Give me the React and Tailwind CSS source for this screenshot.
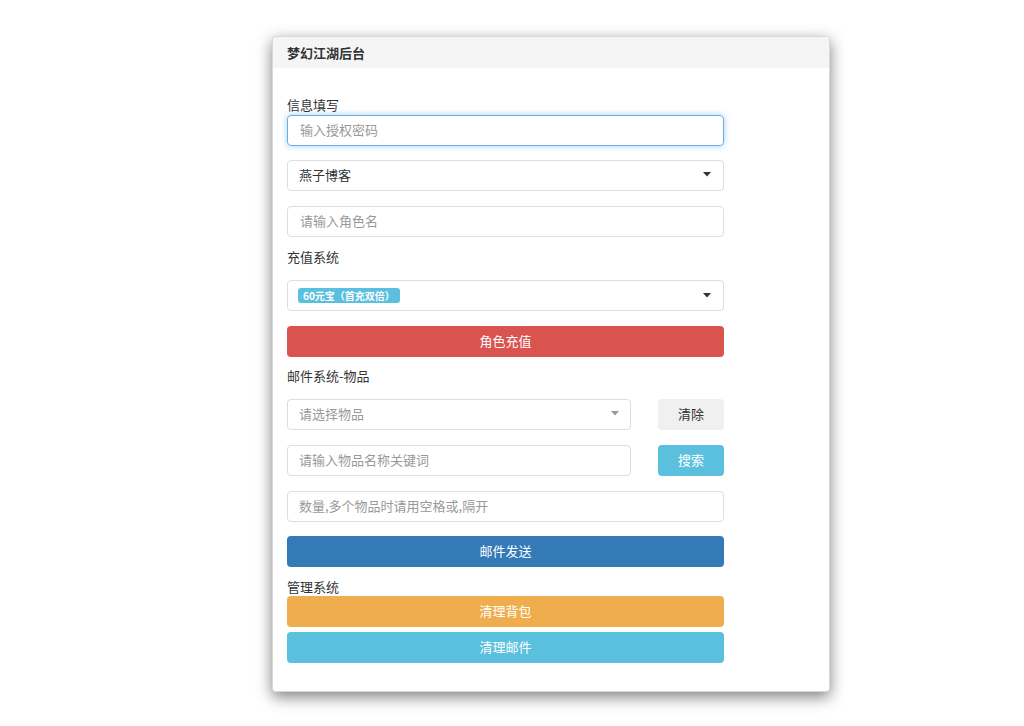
import React from "react";

const font = { fontFamily: '"Noto Sans CJK SC", "Noto Sans", sans-serif' };

function Caret({ gray }) {
  return (
    <svg width="8" height="5" viewBox="0 0 8 5" className="shrink-0">
      <path d="M0 0 L8 0 L4 4.5 Z" fill={gray ? "#999" : "#333"} />
    </svg>
  );
}

export default function App() {
  return (
    <div className="min-h-[726px] bg-white pl-[272px] pt-[36px]" style={font}>
      <div className="w-[558px] rounded-[4px] border border-[rgba(0,0,0,0.15)] bg-white shadow-[0_5px_15px_rgba(0,0,0,0.5)] overflow-hidden">
        <div className="flex h-[31px] items-center bg-[#f5f5f5] px-[14px] pb-[1px] text-[13px] font-bold leading-none text-[#333]">
          梦幻江湖后台
        </div>
        <div className="px-[14px] pt-[29px] pb-[28px] text-[13px] text-[#333]">
          <div className="w-[437px]">
            <div className="h-[18px] leading-[16px]">信息填写</div>
            <div className="flex h-[31px] items-center rounded-[4px] border border-[#66afe9] px-[12px] pb-[2px] text-[#999] shadow-[0_0_6px_rgba(102,175,233,0.6)]">
              输入授权密码
            </div>
            <div className="mt-[14px] flex h-[31px] items-center justify-between rounded-[4px] border border-[#ddd] pl-[11px] pr-[12px] pb-[2px] text-[#333]">
              <span>燕子博客</span>
              <Caret />
            </div>
            <div className="mt-[15px] flex h-[31px] items-center rounded-[4px] border border-[#ddd] px-[12px] pb-[2px] text-[#999]">
              请输入角色名
            </div>
            <div className="mt-[12px] h-[18px] leading-[16px]">充值系统</div>
            <div className="mt-[13px] flex h-[31px] items-center justify-between rounded-[4px] border border-[#ddd] pl-[10px] pr-[12px]">
              <span className="flex h-[15px] items-center rounded-[3px] bg-[#5bc0de] px-[5px] text-[10px] font-bold leading-none text-white">
                60元宝（首充双倍）
              </span>
              <Caret />
            </div>
            <button className="mt-[15px] flex h-[31px] w-full items-center justify-center rounded-[4px] bg-[#d9534f] pb-[2px] text-[13px] text-white">
              角色充值
            </button>
            <div className="mt-[11px] h-[18px] leading-[16px]">邮件系统-物品</div>
            <div className="mt-[13px] flex items-center justify-between">
              <div className="flex h-[31px] w-[344px] items-center justify-between rounded-[4px] border border-[#ddd] pl-[11px] pr-[11px] pb-[2px] text-[#999]">
                <span>请选择物品</span>
                <Caret gray />
              </div>
              <button className="flex h-[31px] w-[66px] items-center justify-center rounded-[4px] bg-[#f0f0f0] pb-[2px] text-[13px] text-[#333]">
                清除
              </button>
            </div>
            <div className="mt-[15px] flex items-center justify-between">
              <div className="flex h-[31px] w-[344px] items-center rounded-[4px] border border-[#ddd] px-[11px] pb-[2px] text-[#999]">
                请输入物品名称关键词
              </div>
              <button className="flex h-[31px] w-[66px] items-center justify-center rounded-[4px] bg-[#5bc0de] pb-[2px] text-[13px] text-white">
                搜索
              </button>
            </div>
            <div className="mt-[15px] flex h-[31px] items-center rounded-[4px] border border-[#ddd] px-[11px] pb-[2px] text-[#999]">
              数量,多个物品时请用空格或,隔开
            </div>
            <button className="mt-[14px] flex h-[31px] w-full items-center justify-center rounded-[4px] bg-[#337ab7] pb-[2px] text-[13px] text-white">
              邮件发送
            </button>
            <div className="mt-[12px] h-[17px] leading-[16px]">管理系统</div>
            <button className="flex h-[31px] w-full items-center justify-center rounded-[4px] bg-[#f0ad4e] pb-[2px] text-[13px] text-white">
              清理背包
            </button>
            <button className="mt-[5px] flex h-[31px] w-full items-center justify-center rounded-[4px] bg-[#5bc0de] pb-[2px] text-[13px] text-white">
              清理邮件
            </button>
          </div>
        </div>
      </div>
    </div>
  );
}
